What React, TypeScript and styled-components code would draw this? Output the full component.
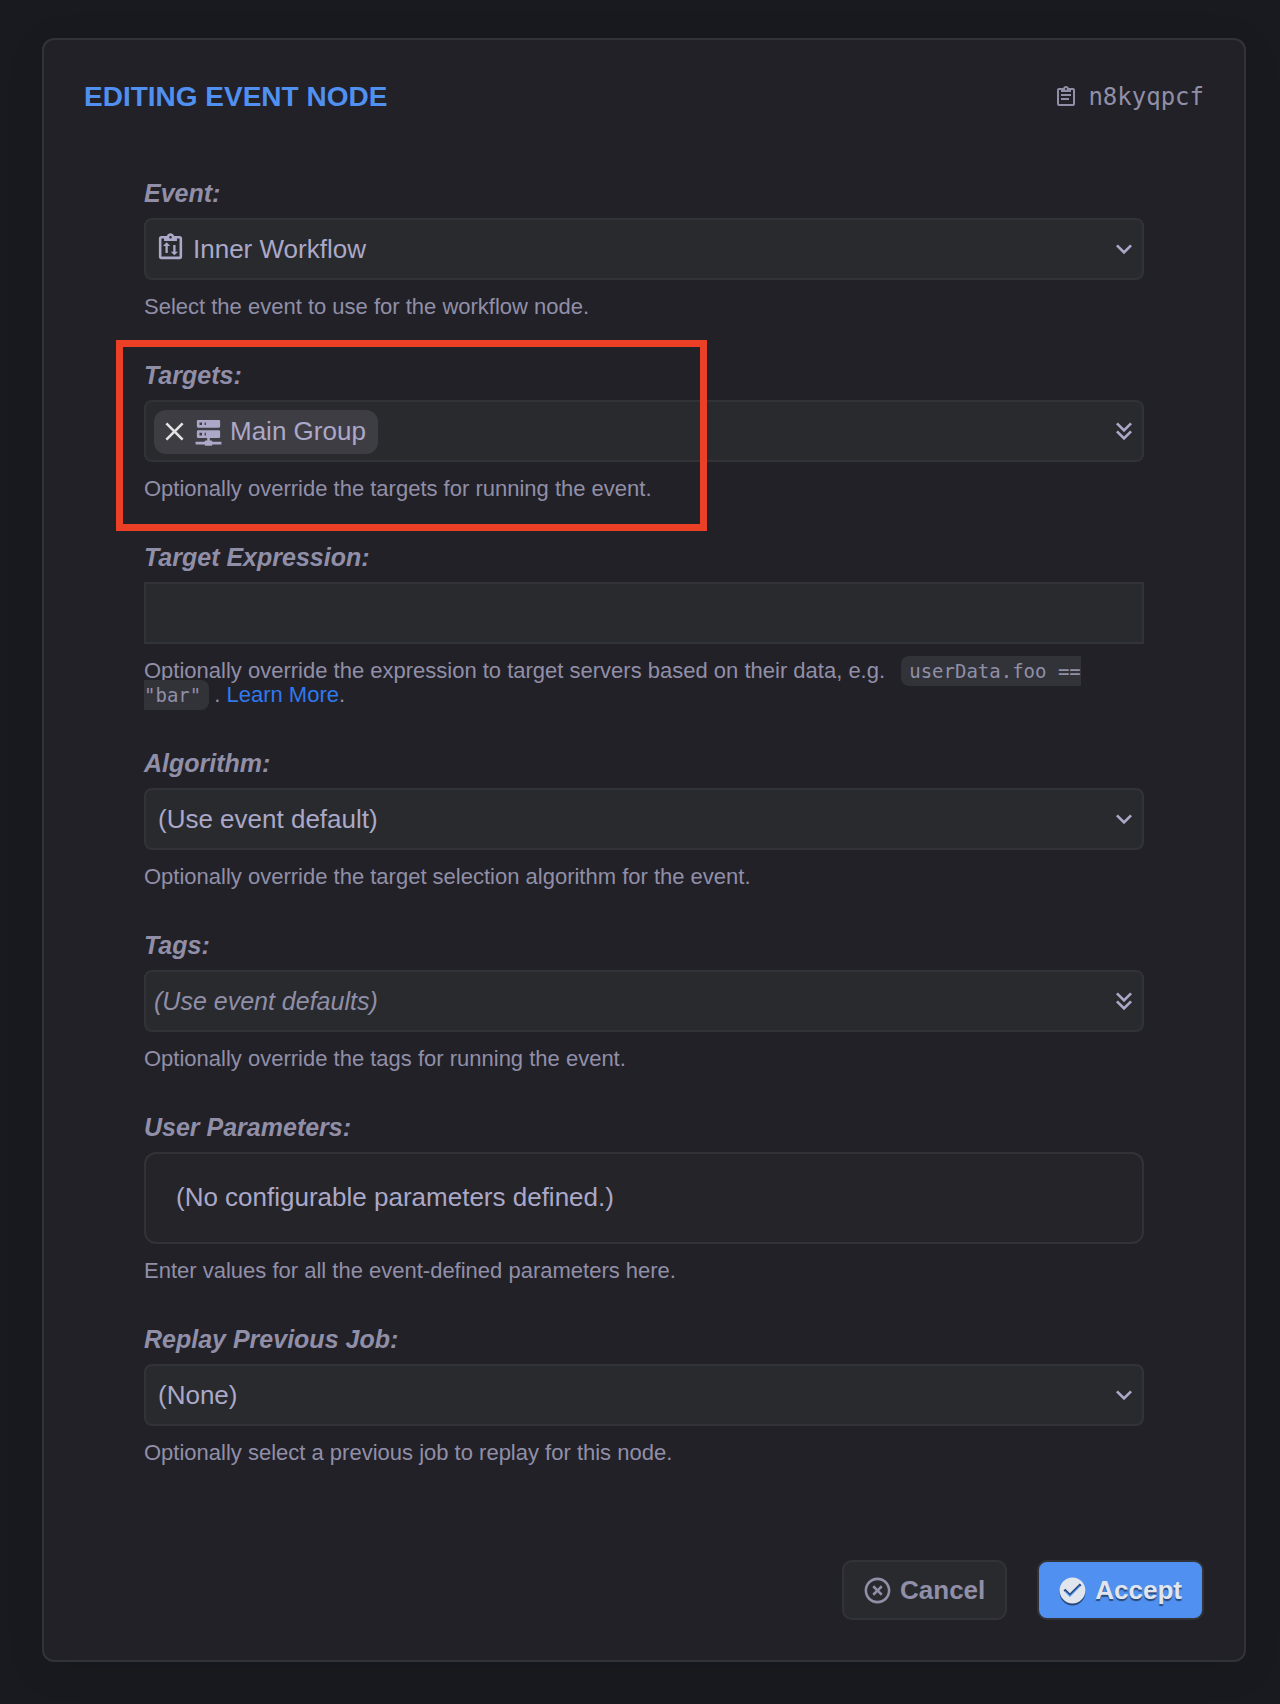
import React from "react";
import styled, { createGlobalStyle } from "styled-components";

const sans = `"Liberation Sans", Arial, Helvetica, sans-serif`;
const mono = `"DejaVu Sans Mono", Menlo, monospace`;

const GlobalStyle = createGlobalStyle`
  *, *::before, *::after { box-sizing: border-box; }
  body {
    margin: 0;
    background: #191a1f;
    color: #aba8c8;
    font-family: ${sans};
    font-size: 25px;
  }
`;

const Page = styled.main`
  padding: 38px 34px 42px 42px;
`;

const Dialog = styled.form`
  border: 2px solid #323338;
  border-radius: 12px;
  background: #222127;
  padding: 40px;
  box-shadow: 0 8px 40px rgba(0, 0, 0, 0.08);
`;

const Header = styled.header`
  display: flex;
  align-items: center;
  justify-content: space-between;
  height: 34px;
`;

const Title = styled.h1`
  margin: 0;
  color: #5090f0;
  font-size: 28px;
  line-height: 32px;
  font-weight: 700;
  text-transform: uppercase;
`;

const NodeId = styled.span`
  display: flex;
  align-items: center;
  gap: 10px;
  color: #918fa8;
  font-family: ${mono};
  font-size: 24px;
  line-height: 34px;
`;

const Fields = styled.div`
  display: flex;
  flex-direction: column;
  gap: 41px;
  padding: 64px 60px 95px;
`;

const Field = styled.div`
  position: relative;
`;

const Label = styled.label`
  display: block;
  width: fit-content;
  margin-bottom: 10px;
  color: #918fa8;
  font-size: 25px;
  line-height: 30px;
  font-weight: 700;
  font-style: italic;
`;

const Caption = styled.p`
  margin: 15px 0 0;
  color: #918fa8;
  font-size: 22px;
  line-height: 24px;
`;

const Code = styled.code`
  margin: 0 5px 0 10px;
  padding: 4px 8px;
  border-radius: 8px;
  background: #323338;
  font-family: ${mono};
  font-size: 19px;
`;

const Link = styled.a`
  color: #3079f0;
  text-decoration: none;
`;

const Control = styled.div`
  position: relative;
  display: flex;
  align-items: center;
  height: 62px;
  border: 2px solid #323338;
  border-radius: 8px;
  background: #282a2e;
`;

const Select = styled.select<{ $iconic?: boolean }>`
  flex: 1;
  width: 100%;
  height: 100%;
  padding: 0 48px 0 ${(p) => (p.$iconic ? 47 : 12)}px;
  border: 0;
  outline: 0;
  appearance: none;
  background: transparent;
  color: #aba8c8;
  font-family: ${sans};
  font-size: 26px;
`;

const LeadIcon = styled.span`
  position: absolute;
  top: 12px;
  left: 9px;
  display: flex;
  pointer-events: none;
`;

const Arrow = styled.span`
  position: absolute;
  right: 2px;
  display: flex;
  pointer-events: none;
`;

const TextInput = styled.input`
  display: block;
  width: 100%;
  height: 62px;
  padding: 0 12px;
  border: 2px solid #323338;
  border-radius: 0;
  outline: 0;
  background: #282a2e;
  color: #aba8c8;
  font-family: ${sans};
  font-size: 26px;
`;

const MenuButton = styled.button`
  flex: 1;
  height: 100%;
  padding: 0 8px;
  border: 0;
  background: transparent;
  color: #918fa8;
  font-family: ${sans};
  font-size: 25px;
  font-style: italic;
  text-align: left;
`;

const Chip = styled.span`
  display: flex;
  align-items: center;
  height: 44px;
  margin: 2px 0 0 8px;
  padding: 0 12px 2px 5px;
  border-radius: 12px;
  background: #3f3d44;
  font-size: 26px;
`;

const ChipRemove = styled.button`
  display: flex;
  padding: 0;
  margin-right: 3px;
  border: 0;
  background: transparent;
  color: #e4e4e4;
`;

const ChipText = styled.span`
  margin-left: 6px;
`;

const ParamBox = styled.div`
  height: 92px;
  padding: 0 30px;
  border: 2px solid #323338;
  border-radius: 12px;
  background: #252429;
  font-size: 26px;
  line-height: 86px;
`;

const Highlight = styled.div`
  position: absolute;
  top: -20px;
  bottom: -30px;
  left: -28px;
  width: 591px;
  border: 7px solid #eb4025;
  pointer-events: none;
`;

const Actions = styled.footer`
  display: flex;
  justify-content: flex-end;
  gap: 30px;
`;

const Button = styled.button<{ $primary?: boolean }>`
  display: flex;
  align-items: center;
  gap: 7px;
  height: 60px;
  padding: 0 20px 0 18px;
  border: 2px solid #323338;
  border-radius: 10px;
  background: ${(p) => (p.$primary ? "#5090f0" : "#282a2e")};
  color: ${(p) => (p.$primary ? "#e0e5ee" : "#918fa8")};
  font-family: ${sans};
  font-size: 26px;
  font-weight: 700;
  text-shadow: ${(p) => (p.$primary ? "0 2px 1px rgba(0, 0, 0, 0.5)" : "none")};

  svg {
    filter: ${(p) => (p.$primary ? "drop-shadow(0 2px 0 rgba(0, 0, 0, 0.5))" : "none")};
  }
`;

const paths = {
  clipboardText:
    "M19,3H14.82C14.4,1.84 13.3,1 12,1C10.7,1 9.6,1.84 9.18,3H5A2,2 0 0,0 3,5V19A2,2 0 0,0 5,21H19A2,2 0 0,0 21,19V5A2,2 0 0,0 19,3M12,3A1,1 0 0,1 13,4A1,1 0 0,1 12,5A1,1 0 0,1 11,4A1,1 0 0,1 12,3M7,7H17V5H19V19H5V5H7V7M17,11H7V9H17V11M15,15H7V13H15V15Z",
  clipboardFlow:
    "M19,3H14.82C14.4,1.84 13.3,1 12,1C10.7,1 9.6,1.84 9.18,3H5A2,2 0 0,0 3,5V19A2,2 0 0,0 5,21H19A2,2 0 0,0 21,19V5A2,2 0 0,0 19,3M12,3A1,1 0 0,1 13,4A1,1 0 0,1 12,5A1,1 0 0,1 11,4A1,1 0 0,1 12,3M7,7H17V5H19V19H5V5H7V7M9,8L6.2,10.8H8.1V16.2H9.9V10.8H11.8L9,8M14.1,10V15.2H12.2L15,18L17.8,15.2H15.9V10H14.1Z",
  close:
    "M19,6.41L17.59,5L12,10.59L6.41,5L5,6.41L10.59,12L5,17.59L6.41,19L12,13.41L17.59,19L19,17.59L13.41,12L19,6.41Z",
  server:
    "M13,19H14A1,1 0 0,1 15,20H22V22H15A1,1 0 0,1 14,23H10A1,1 0 0,1 9,22H2V20H9A1,1 0 0,1 10,19H11V17H4A1,1 0 0,1 3,16V12A1,1 0 0,1 4,11H20A1,1 0 0,1 21,12V16A1,1 0 0,1 20,17H13V19M4,3H20A1,1 0 0,1 21,4V8A1,1 0 0,1 20,9H4A1,1 0 0,1 3,8V4A1,1 0 0,1 4,3M9,7H10V5H9V7M9,15H10V13H9V15M5,5V7H7V5H5M5,13V15H7V13H5Z",
  down: "M7.41,8.58L12,13.17L16.59,8.58L18,10L12,16L6,10L7.41,8.58Z",
  doubleDown:
    "M16.59,5.59L18,7L12,13L6,7L7.41,5.59L12,10.17L16.59,5.59M16.59,11.59L18,13L12,19L6,13L7.41,11.59L12,16.17L16.59,11.59Z",
  cancel:
    "M12,20C7.59,20 4,16.41 4,12C4,7.59 7.59,4 12,4C16.41,4 20,7.59 20,12C20,16.41 16.41,20 12,20M12,2C6.47,2 2,6.47 2,12C2,17.53 6.47,22 12,22C17.53,22 22,17.53 22,12C22,6.47 17.53,2 12,2M14.59,8L12,10.59L9.41,8L8,9.41L10.59,12L8,14.59L9.41,16L12,13.41L14.59,16L16,14.59L13.41,12L16,9.41L14.59,8Z",
  check:
    "M12,2C6.5,2 2,6.5 2,12C2,17.5 6.5,22 12,22C17.5,22 22,17.5 22,12C22,6.5 17.5,2 12,2M10,17L5,12L6.41,10.59L10,14.17L17.59,6.58L19,8L10,17Z",
};

function Icon({ name, size = 31 }: { name: keyof typeof paths; size?: number }) {
  return (
    <svg width={size} height={size} viewBox="0 0 24 24" fill="currentColor" aria-hidden="true">
      <path d={paths[name]} />
    </svg>
  );
}

interface SelectFieldProps {
  id: string;
  label: string;
  value: string;
  caption: string;
  icon?: keyof typeof paths;
}

function SelectField({ id, label, value, caption, icon }: SelectFieldProps) {
  return (
    <Field>
      <Label htmlFor={id}>{label}</Label>
      <Control>
        {icon && (
          <LeadIcon>
            <Icon name={icon} />
          </LeadIcon>
        )}
        <Select id={id} $iconic={!!icon}>
          <option>{value}</option>
        </Select>
        <Arrow>
          <Icon name="down" size={32} />
        </Arrow>
      </Control>
      <Caption>{caption}</Caption>
    </Field>
  );
}

export default function App() {
  return (
    <>
      <GlobalStyle />
      <Page>
        <Dialog onSubmit={(e) => e.preventDefault()}>
          <Header>
            <Title>Editing Event Node</Title>
            <NodeId>
              <Icon name="clipboardText" size={24} />
              n8kyqpcf
            </NodeId>
          </Header>
          <Fields>
            <SelectField
              id="event"
              label="Event:"
              value="Inner Workflow"
              icon="clipboardFlow"
              caption="Select the event to use for the workflow node."
            />
            <Field>
              <Label htmlFor="targets">Targets:</Label>
              <Control>
                <Chip>
                  <ChipRemove type="button" aria-label="Remove Main Group">
                    <Icon name="close" />
                  </ChipRemove>
                  <Icon name="server" />
                  <ChipText>Main Group</ChipText>
                </Chip>
                <MenuButton id="targets" type="button" aria-haspopup="listbox" />
                <Arrow>
                  <Icon name="doubleDown" size={32} />
                </Arrow>
              </Control>
              <Caption>Optionally override the targets for running the event.</Caption>
              <Highlight />
            </Field>
            <Field>
              <Label htmlFor="expression">Target Expression:</Label>
              <TextInput id="expression" type="text" />
              <Caption>
                Optionally override the expression to target servers based on their data, e.g.{" "}
                <Code>userData.foo == "bar"</Code>. <Link href="#learn-more">Learn More</Link>.
              </Caption>
            </Field>
            <SelectField
              id="algorithm"
              label="Algorithm:"
              value="(Use event default)"
              caption="Optionally override the target selection algorithm for the event."
            />
            <Field>
              <Label htmlFor="tags">Tags:</Label>
              <Control>
                <MenuButton id="tags" type="button" aria-haspopup="listbox">
                  (Use event defaults)
                </MenuButton>
                <Arrow>
                  <Icon name="doubleDown" size={32} />
                </Arrow>
              </Control>
              <Caption>Optionally override the tags for running the event.</Caption>
            </Field>
            <Field>
              <Label as="div">User Parameters:</Label>
              <ParamBox>(No configurable parameters defined.)</ParamBox>
              <Caption>Enter values for all the event-defined parameters here.</Caption>
            </Field>
            <SelectField
              id="replay"
              label="Replay Previous Job:"
              value="(None)"
              caption="Optionally select a previous job to replay for this node."
            />
          </Fields>
          <Actions>
            <Button type="button">
              <Icon name="cancel" />
              Cancel
            </Button>
            <Button type="submit" $primary>
              <Icon name="check" />
              Accept
            </Button>
          </Actions>
        </Dialog>
      </Page>
    </>
  );
}
